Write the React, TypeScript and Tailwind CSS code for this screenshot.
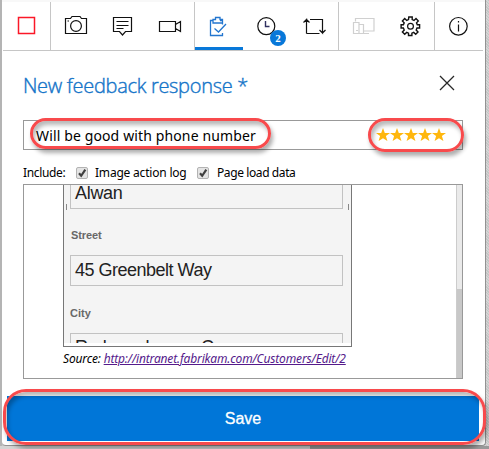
import type { ReactNode } from "react";

function Cell({ children, className = "" }: { children?: ReactNode; className?: string }) {
  return <div className={`relative h-12 w-12 shrink-0 ${className}`}>{children}</div>;
}

function Glyph({ children, color = "#111" }: { children: ReactNode; color?: string }) {
  return (
    <svg width="48" height="48" viewBox="0 0 48 48" fill="none" stroke={color} strokeWidth="1.2">
      {children}
    </svg>
  );
}

function Divider() {
  return <div className="-mr-px h-12 w-px shrink-0 bg-[#c6c6c6]" />;
}

function Toolbar() {
  return (
    <div className="ml-px flex h-[49px] w-[480px] border-b border-[#c6c6c6]">
      <Cell className="-mr-px">
        <Glyph color="#fb1828"><rect x="15.5" y="15.5" width="16" height="16" strokeWidth="1.5" /></Glyph>
      </Cell>
      <Divider />
      <Cell>
        <Glyph>
          <path d="M15.5 16.5h5l1.5-2h8l1.500 2h5v15h-21z" />
          <circle cx="26" cy="24" r="5.4" />
          <path d="M17.5 19h1.5" />
        </Glyph>
      </Cell>
      <Cell>
        <Glyph>
          <path d="M15.5 15.5h18v14h-6l-3 3.5-3-3.5h-6zM18.5 19.5h12M18.5 23.5h12M18.5 26.5h7" />
        </Glyph>
      </Cell>
      <Cell>
        <Glyph>
          <path d="M13.5 19.5h16v10h-16zM29.5 22.5l5-3v10l-5-3" />
        </Glyph>
      </Cell>
      <Divider />
      <Cell className="ml-px -mr-px">
        <Glyph color="#2376cf">
          <path d="M18 18.5h-2.500v15h12v-2.5M25 18.500h2.500v4M18 21v-3.500h2.500v-2h4.500v2H27.500V21zM19.500 26.500l4 3.500 7.500-8" strokeWidth="1.300" />
        </Glyph>
        <div className="absolute bottom-0 left-0 h-[3px] w-12 bg-[#0878d9]" />
      </Cell>
      <Cell>
        <Glyph>
          <circle cx="24.300" cy="24.2" r="8.5" />
          <path d="M23.5 19v5.500h4" stroke="#303060" strokeWidth="1.4" />
        </Glyph>
        <div className="absolute left-[28px] top-7 flex h-4 w-4 items-center justify-center rounded-full bg-[#0878d9] font-['Liberation_Serif',serif] text-[11px] font-bold leading-none text-white">2</div>
      </Cell>
      <Cell>
        <Glyph>
          <path d="M16.500 31.500v-14l-3 3M16.500 17.500l3 3M16.500 31.500h13M20 17.500h12.500v13.500l-3-3M32.500 31l3-3" />
        </Glyph>
      </Cell>
      <Divider />
      <Cell>
        <Glyph color="#d0d0d0">
          <path d="M17.500 19.500v-3h18.500v12.500h-10.500M15.500 20.500h5.500v11h-5.500zM21 22.500h4.500v9h-4.500M25.500 31.500h5.500M18 28.500h2" />
        </Glyph>
      </Cell>
      <Cell>
        <Glyph>
          <path d="M22.800 15h3.400v2.600l1.800.8 2-1.900 2.300 2.400-1.800 1.900.8 2h2.300v3.200H31l-.8 2 1.800 1.900-2.300 2.400-2-1.900-1.800.8v2.300h-3.400v-2.300l-1.800-.8-2 1.900-2.300-2.400 1.800-1.900-.8-2h-2.300v-3.200h2.300l.8-2-1.800-1.900 2.300-2.400 2 1.900 1.800-.8z" strokeWidth="1.400" />
          <circle cx="24.500" cy="24.300" r="2.900" />
        </Glyph>
      </Cell>
      <Divider />
      <Cell>
        <Glyph>
          <circle cx="24.400" cy="24.300" r="8.800" />
          <path d="M24.500 19v1.600M24.500 22.500v7" />
        </Glyph>
      </Cell>
    </div>
  );
}

function Check() {
  return (
    <span className="flex h-3 w-3 shrink-0 items-center justify-center rounded-[2px] border border-[#b3b3b3] bg-[#e4e4e4]">
      <svg width="12" height="12" viewBox="0 0 12 12" className="shrink-0">
        <path d="M3 6.300l2.200 2.500L9.300 2.700" fill="none" stroke="#404040" strokeWidth="2.200" />
      </svg>
    </span>
  );
}

const mark = "absolute border-[3px] border-[#f84a4c] pointer-events-none shadow-[2px_4px_4px_rgba(0,0,0,0.32),inset_2px_4px_4px_rgba(0,0,0,0.28)]";

export default function App() {
  return (
    <div className="relative h-[449px] w-[489px] overflow-hidden bg-[repeating-linear-gradient(45deg,#c5c5c5_0px,#c5c5c5_1px,#d5d5d5_1px,#d5d5d5_2px)] pl-0.5 font-['Noto_Sans','Open_Sans',sans-serif] text-black">
      <div className="absolute bottom-0 left-0 h-[3px] w-[310px] bg-[#d4d4d4]" />
      <div className="absolute bottom-0 left-[310px] h-[3px] w-[179px] bg-[#999]" />
      <div className="relative h-[446px] w-[484px] rounded-b border-b border-r border-[#929292] bg-white">
        <div className="h-0.5 bg-[#f8f8f8]" />
        <Toolbar />
        <div className="flex h-[69px] items-start justify-between pl-[21px] pr-[30px]">
          <h1 className="mt-[21px] whitespace-nowrap font-['Open_Sans','Noto_Sans',sans-serif] text-[20px] font-light leading-[28px] tracking-[-0.300px] text-[#1474c8] [-webkit-text-stroke:0.4px_#1474c8]">New feedback response *</h1>
          <svg className="mt-6 shrink-0" width="16" height="16" viewBox="0 0 16 16" fill="none" stroke="#282828" strokeWidth="1.300"><path d="M1 1l14 14M15 1L1 15" /></svg>
        </div>
        <div className="ml-[21px] flex h-[30px] w-[440px] items-center justify-between border border-[#999] pl-3 pr-[14px]">
          <span className="whitespace-nowrap pt-px text-[14px] leading-5 tracking-[0.130px]">Will be good with phone number</span>
          <div className="flex w-[72px]">
            {[0, 1, 2, 3, 4].map((n) => (
              <svg key={n} width="14" height="14" viewBox="0 0 14 14" className="shrink-0" fill="#ffb70d"><path d="M7 0l1.800 4.900H14L9.900 8.100l1.500 5L7 10.200 2.600 13.100 4.100 8.100 0 4.900h5.200z" /></svg>
            ))}
          </div>
        </div>
        <div className="ml-[21px] flex h-[34px] items-center pt-3 text-[12px] leading-4 tracking-[-0.350px]">
          <span className="w-[53px]">Include:</span>
          <Check />
          <span className="ml-[7px] w-[102px] whitespace-nowrap tracking-[-0.200px]">Image action log</span>
          <Check />
          <span className="ml-[8px] whitespace-nowrap tracking-[-0.400px]">Page load data</span>
        </div>
        <div className="ml-[21px] flex h-[195px] w-[440px] justify-between overflow-hidden border border-[#999]">
          <div className="ml-[39px] w-[300px]">
            <div className="relative h-[162px] w-[289px] overflow-hidden border border-t-0 border-[#777] bg-[#f4f4f4] font-['Liberation_Sans',sans-serif] text-[#222]">
              <div className="absolute left-[2px] top-[19px] h-[6px] w-px bg-[#888]" />
              <div className="absolute right-[2px] top-[19px] h-[6px] w-px bg-[#888]" />
              <div className="ml-[6px] h-[24px] w-[273px] border border-t-0 border-[#c2c2c2] pl-1 text-[18px] leading-[17px] tracking-[-0.300px]">Alwan</div>
              <div className="ml-[7px] flex h-[46px] items-center pt-[7px] text-[11px] font-bold tracking-[-0.100px] text-[#686868]">Street</div>
              <div className="ml-[6px] h-[31px] w-[273px] border border-[#c2c2c2] pl-1 text-[18px] leading-[29px] tracking-[-0.500px]">45 Greenbelt Way</div>
              <div className="ml-[6px] flex h-[47px] items-center pt-[7px] text-[11px] font-bold text-[#686868]">City</div>
              <div className="ml-[6px] flex h-[10px] w-[273px] overflow-hidden border border-b-0 border-[#c2c2c2] pl-1 text-[18px] leading-[27px] tracking-[-0.600px]"><span className="w-[126px]">Redmond</span><span>C</span></div>
              <div className="absolute bottom-0 left-0 h-[3px] w-full bg-white" />
            </div>
            <div className="whitespace-nowrap text-[12px] italic leading-[23px] tracking-[-0.160px]">Source: <span className="text-[#551a8b] underline">http://intranet.fabrikam.com/Customers/Edit/2</span></div>
          </div>
          <div className="h-[193px] w-[6px] border-l border-[#ccc] bg-[#eaeaea] pt-[104px]">
            <div className="h-[89px] w-full bg-[#c8c8c8]" />
          </div>
        </div>
        <button className="ml-[5px] mt-[17px] block h-[45px] w-[472px] bg-[#0076d8] font-['Liberation_Sans',sans-serif] text-[16px] leading-[43px] text-white [-webkit-text-stroke:0.3px_white]">Save</button>
      </div>
      <div className="absolute left-0 top-0 h-[446px] w-0.5 bg-[#b4b4b4]" />
      <div className={`${mark} left-[30px] top-[118px] h-[31px] w-[241px] rounded-[18px]`} />
      <div className={`${mark} left-[368px] top-[118px] h-[34px] w-[96px] rounded-[18px]`} />
      <div className={`${mark} left-[3px] top-[389px] h-[56px] w-[483px] rounded-[23px]`} />
    </div>
  );
}
